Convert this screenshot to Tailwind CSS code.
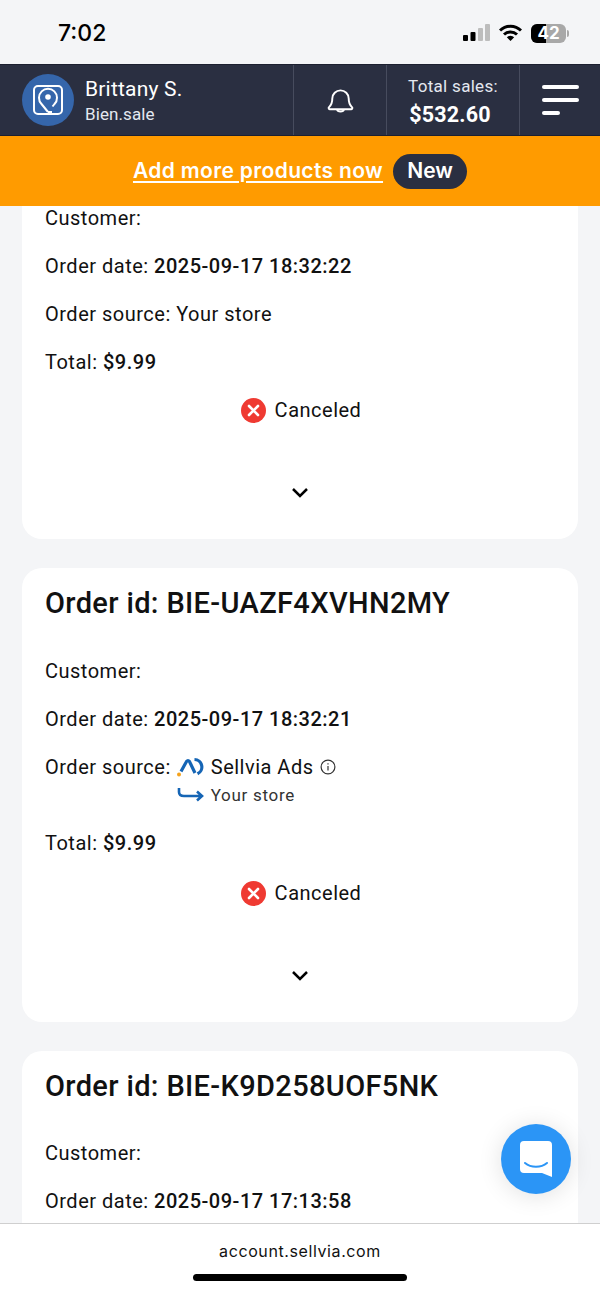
<!DOCTYPE html>
<html lang="en">
<head>
  <meta charset="UTF-8">
  <meta name="viewport" content="width=device-width, initial-scale=1.0">
  <title>Orders</title>
  <script src="https://cdn.jsdelivr.net/npm/@tailwindcss/browser@4"></script>
</head>
<body class="relative w-[600px] h-[1298px] overflow-hidden flex flex-col bg-[#f4f5f7] text-[#111] font-['Roboto',sans-serif]">

  <!-- status bar -->
  <div class="h-[64px] shrink-0 flex items-center pl-[58px] pr-[31px] pt-[2px]">
    <span class="text-[23px] font-medium font-['Inter',sans-serif] text-black">7:02</span>
    <div class="ml-auto flex items-center gap-[9px]">
      <svg width="27" height="18" viewBox="0 0 27 18">
        <rect x="0" y="11" width="5" height="6" rx="1" fill="#000"/>
        <rect x="7.500" y="8" width="5" height="9" rx="1" fill="#000"/>
        <rect x="15" y="4" width="5" height="13" rx="1" fill="#bdbdbd"/>
        <rect x="22" y="0" width="5" height="17" rx="1" fill="#bdbdbd"/>
      </svg>
      <svg width="23" height="18" viewBox="0 0 23 18" fill="none" stroke="#000" stroke-width="3">
        <path d="M1 6.500a15 15 0 0 1 21 0"/>
        <path d="M5 10.500a9.500 9.500 0 0 1 13 0"/>
        <path d="M11.500 17l-3.700-3.700a5.300 5.300 0 0 1 7.400 0z" fill="#000" stroke="none"/>
      </svg>
      <div class="relative flex items-center">
        <div class="relative w-[35px] h-[19px] rounded-[6px] overflow-hidden bg-[#a8a8a8] flex items-center justify-center">
          <div class="absolute left-0 top-0 bottom-0 w-[15px] bg-black"></div>
          <span class="relative text-[17px] leading-none font-bold text-white font-['Inter',sans-serif]">42</span>
        </div>
        <div class="w-[2px] h-[7px] ml-[1px] rounded-r bg-[#a8a8a8]"></div>
      </div>
    </div>
  </div>

  <!-- header -->
  <header class="h-[72px] shrink-0 flex bg-[#2a2f41] border-y border-[#1c2030] text-white">
    <div class="w-[293px] flex items-center pl-[22px] gap-[11px]">
      <div class="w-[52px] h-[52px] rounded-full bg-[#3566ab] flex items-center justify-center">
        <svg width="32" height="32" viewBox="0 0 32 32" fill="none" stroke="#fff" stroke-width="2">
          <rect x="2" y="2" width="28" height="28" rx="4"/>
          <path d="M16 28l-6.500-8a9 9 0 1 1 13 0l-2 2.500" stroke-linejoin="round"/>
          <path d="M16 28h4" />
          <circle cx="16" cy="13" r="2.800" fill="#fff" stroke="none"/>
        </svg>
      </div>
      <div class="flex flex-col">
        <span class="text-[21px] leading-[28px] tracking-[0.2px]">Brittany S.</span>
        <span class="text-[17px] leading-[23px] tracking-[0.1px] text-[#e4e8f0]">Bien.sale</span>
      </div>
    </div>
    <div class="w-[93px] border-l border-[#474c5e] flex items-center justify-center">
      <svg width="27" height="27" viewBox="0 0 28 28" fill="none" stroke="#fff" stroke-width="2" stroke-linejoin="round">
        <path d="M2 21c2-2 3.500-3 3.500-9a8.500 8.500 0 0 1 17 0c0 6 1.500 7 3.500 9 .8.800 0 2-1 2H3c-1 0-1.800-1.200-1-2z"/>
        <path d="M10.500 23.500c.5 2.500 6.500 2.500 7 0"/>
      </svg>
    </div>
    <div class="w-[134px] border-x border-[#474c5e] flex flex-col items-center justify-center pt-[2px]">
      <span class="text-[17px] leading-[26px] tracking-[0.3px] text-[#e4e8f0]">Total sales:</span>
      <span class="text-[21.500px] leading-[31px] font-bold tracking-[0.2px] -ml-[6px]">$532.60</span>
    </div>
    <div class="flex-1 flex flex-col justify-center gap-[9px] pl-[22px]">
      <div class="w-[37px] h-[4px] rounded-full bg-white"></div>
      <div class="w-[37px] h-[4px] rounded-full bg-white"></div>
      <div class="w-[18px] h-[4px] rounded-full bg-white"></div>
    </div>
  </header>

  <!-- promo banner -->
  <div class="h-[70px] shrink-0 bg-[#ff9b00] flex items-center justify-center gap-[10px] text-white font-['Inter',sans-serif] font-semibold text-[21px]">
    <a class="underline underline-offset-[3px] decoration-[1.5px] tracking-[0.35px]">Add more products now</a>
    <span class="h-[35px] w-[74px] rounded-full bg-[#2a2f41] flex items-center justify-center">New</span>
  </div>

  <!-- orders -->
  <main class="flex-1 min-h-0 overflow-hidden flex flex-col gap-[29px] px-[22px]">
    <section class="shrink-0 bg-white rounded-b-[20px] px-[23px]">
      <p class="h-[24px] text-[20px] leading-[24px] tracking-[0.5px]">Customer:</p>
      <p class="mt-[24px] text-[20px] leading-[24px] tracking-[0.5px]">Order date: <b class="font-medium">2025-09-17 18:32:22</b></p>
      <p class="mt-[24px] text-[20px] leading-[24px] tracking-[0.5px]">Order source: Your store</p>
      <p class="mt-[24px] text-[20px] leading-[24px] tracking-[0.5px]">Total: <b class="font-medium">$9.99</b></p>
      <div class="mt-[23px] pl-[2px] flex items-center justify-center gap-[9px] text-[20px] leading-[26px] tracking-[0.5px]">
        <svg width="25" height="25" viewBox="0 0 25 25"><circle cx="12.500" cy="12.500" r="12.500" fill="#ef3a32"/><path d="M8 8l9 9M17 8l-9 9" stroke="#fff" stroke-width="2.600" stroke-linecap="round"/></svg>
        <span>Canceled</span>
      </div>
      <div class="mt-[64px] pb-[40px] flex justify-center">
        <svg width="18" height="12" viewBox="0 0 18 12" fill="none" stroke="#000" stroke-width="2.500"><path d="M2 2l7 7 7-7"/></svg>
      </div>
    </section>

    <section class="shrink-0 bg-white rounded-[20px] px-[23px]">
      <h2 class="pt-[17px] text-[29px] leading-[36px] font-medium tracking-[0.35px]">Order id: BIE-UAZF4XVHN2MY</h2>
      <p class="mt-[38px] text-[20px] leading-[24px] tracking-[0.5px]">Customer:</p>
      <p class="mt-[24px] text-[20px] leading-[24px] tracking-[0.5px]">Order date: <b class="font-medium">2025-09-17 18:32:21</b></p>
      <div class="mt-[24px] flex text-[20px] leading-[24px] tracking-[0.5px]">
        <span>Order source:</span>
        <div class="ml-[6px] flex flex-col">
          <div class="flex items-center gap-[7px]">
            <svg width="27" height="20" viewBox="0 0 27 20" fill="none" stroke="#1565b5" stroke-width="3.200">
              <path d="M4 14.500L9.500 4.500Q11 2.500 12.500 4.500L18 16"/>
              <path d="M17.500 2.500A7.500 7.500 0 0 1 20.500 16.800"/>
              <circle cx="2" cy="17.500" r="2" fill="#f5a21b" stroke="none"/>
            </svg>
            <span>Sellvia Ads</span>
            <svg class="ml-[1px] -translate-x-[2px]" width="16" height="16" viewBox="0 0 16 16" fill="none" stroke="#333" stroke-width="1.200"><circle cx="8" cy="8" r="6.900"/><path d="M8 7v4.500M8 4.300v1.300"/></svg>
          </div>
          <div class="mt-[4px] flex items-center gap-[7px] text-[17px] tracking-[0.7px]">
            <svg width="27" height="16" viewBox="0 0 27 16" fill="none" stroke="#1565b5" stroke-width="2.600"><path d="M2 1v4c0 3 2 4 5 4h17M20 4.500l5 4.500-5 4.500"/></svg>
            <span class="text-[#333]">Your store</span>
          </div>
        </div>
      </div>
      <p class="mt-[24px] text-[20px] leading-[24px] tracking-[0.5px]">Total: <b class="font-medium">$9.99</b></p>
      <div class="mt-[25px] pl-[2px] flex items-center justify-center gap-[9px] text-[20px] leading-[26px] tracking-[0.5px]">
        <svg width="25" height="25" viewBox="0 0 25 25"><circle cx="12.500" cy="12.500" r="12.500" fill="#ef3a32"/><path d="M8 8l9 9M17 8l-9 9" stroke="#fff" stroke-width="2.600" stroke-linecap="round"/></svg>
        <span>Canceled</span>
      </div>
      <div class="mt-[64px] pb-[40px] flex justify-center">
        <svg width="18" height="12" viewBox="0 0 18 12" fill="none" stroke="#000" stroke-width="2.500"><path d="M2 2l7 7 7-7"/></svg>
      </div>
    </section>

    <section class="shrink-0 bg-white rounded-[20px] px-[23px] pb-[40px]">
      <h2 class="pt-[17px] text-[29px] leading-[36px] font-medium tracking-[0.35px]">Order id: BIE-K9D258UOF5NK</h2>
      <p class="mt-[37px] text-[20px] leading-[24px] tracking-[0.5px]">Customer:</p>
      <p class="mt-[24px] text-[20px] leading-[24px] tracking-[0.5px]">Order date: <b class="font-medium">2025-09-17 17:13:58</b></p>
    </section>
  </main>

  <!-- safari address bar -->
  <div class="h-[75px] shrink-0 bg-white border-t border-[#cfcfcf] flex flex-col items-center">
    <span class="mt-[17px] text-[16px] leading-[20px] tracking-[0.6px] font-['Inter',sans-serif] text-[#111]">account.sellvia.com</span>
    <div class="mt-[13px] w-[214px] h-[7px] rounded-full bg-black"></div>
  </div>

  <!-- chat button -->
  <button class="absolute left-[501px] top-[1124px] w-[70px] h-[70px] rounded-full bg-[#2b95f6] shadow-[0_2px_24px_rgba(0,0,0,0.12)] flex items-center justify-center">
    <svg width="32" height="36" viewBox="0 0 32 36">
      <path d="M4 0h24a4 4 0 0 1 4 4v32l-10-4H4a4 4 0 0 1-4-4V4a4 4 0 0 1 4-4z" fill="#fff"/>
      <path d="M5 22c6 5 16 5 22 0" fill="none" stroke="#2b95f6" stroke-width="2" stroke-linecap="round"/>
    </svg>
  </button>
</body>
</html>
